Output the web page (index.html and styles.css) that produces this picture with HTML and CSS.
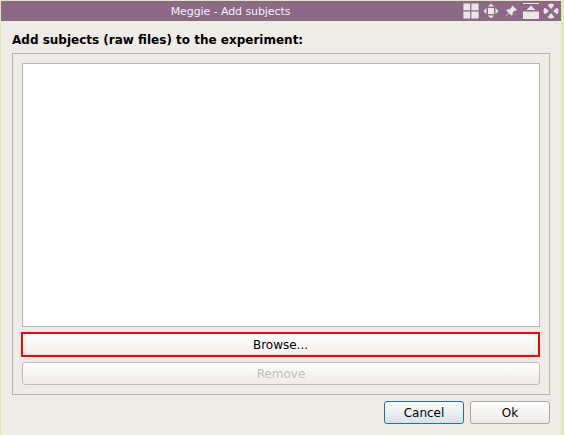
FILE: index.html
```html
<!DOCTYPE html>
<html lang="en">
<head>
<meta charset="utf-8">
<title>Meggie - Add subjects</title>
<link rel="stylesheet" href="styles.css">
</head>
<body>
<div class="window">
  <header class="titlebar">
    <span class="title">Meggie - Add subjects</span>
    <div class="controls">
      <svg viewBox="0 0 16 16"><path d="M.4.4H7.2v6.8H.4zM8.4.4h7.2v6.8H8.4zM.4 8.6h6.8v7H.4zM8.4 8.6h7.2v7H8.4z"/></svg>
      <svg viewBox="0 0 16 16"><path d="M5 5h6v6H5zM8 .5L11.2 3.5H4.8zM8 15.5L4.8 12.5h6.4zM.5 8L3.5 4.8v6.4zM15.5 8l-3-3.2v6.4z"/></svg>
      <svg viewBox="0 0 16 16"><path d="M9.5 2.5L14 7l-1.2.7-1-.2-2.3 2.3.2 2-1 1-2.6-2.6L3 13.5l-.5-.5 3.3-3.1-2.5-2.6 1-1 2.1.2 2.3-2.3-.2-1z"/></svg>
      <svg viewBox="0 0 16 16"><path d="M0 0h16v1H0zM8 2.5L12.5 7h-9zM0 8.5h16V16H0z"/></svg>
      <svg viewBox="0 0 16 16"><path d="M8 6L4.7 2Q5.5.5 8 .5T11.3 2zM8 10l3.3 4q-.8 1.5-3.3 1.5T4.7 14zM6 8l-4 3.3Q.5 10.5.5 8T2 4.7zM10 8l4-3.3q1.5.8 1.5 3.3T14 11.3z"/></svg>
    </div>
  </header>
  <main class="content">
    <h1 class="heading">Add subjects (raw files) to the experiment:</h1>
    <section class="group">
      <div class="file-list"></div>
      <button class="button browse">Browse...</button>
      <button class="button remove" disabled>Remove</button>
    </section>
    <footer class="actions">
      <button class="button cancel">Cancel</button>
      <button class="button ok">Ok</button>
    </footer>
  </main>
</div>
</body>
</html>
```
FILE: styles.css
```css
* { box-sizing: border-box; }
body {
  margin: 0;
  height: 435px;
  padding: 1px 3px 0 1px;
  overflow: hidden;
  background: #dfebb5;
  font: 12px "DejaVu Sans", sans-serif;
  color: #000;
}
.window { height: 434px; background: #efebe7; }
.titlebar {
  display: flex;
  height: 20px;
  background: #8b6987;
  color: #f3eef2;
}
.title {
  flex: 1;
  padding-right: 3px;
  font-size: 11px;
  letter-spacing: -0.08px;
  line-height: 21px;
  text-align: center;
}
.controls { display: flex; gap: 4px; padding: 2px 2px 0 0; }
.controls svg { width: 16px; height: 16px; fill: #ece6e9; }
.content { padding: 0 11px; }
.heading {
  margin: 0;
  height: 32px;
  padding-top: 11px;
  font-size: 12px;
  line-height: 16px;
}
.group {
  display: flex;
  flex-direction: column;
  height: 342px;
  padding: 9px;
  border: 1px solid #b8b5b2;
}
.file-list { height: 264px; background: #fff; border: 1px solid #b8b5b2; }
.button {
  display: block;
  height: 23px;
  padding: 2px 0 0;
  border: 1px solid #aaa7a4;
  border-radius: 3px;
  background: linear-gradient(#fefefe, #eeebe8);
  font: inherit;
  line-height: 19px;
  color: #000;
}
.browse {
  height: 25px;
  margin: 5px 0 0 -1px;
  border: 2px solid #f00;
  border-radius: 0;
  background: linear-gradient(#fefefe, #f3f0ee);
}
.remove { margin-top: 5px; border-color: #c1bebb; color: #bebebe; }
.actions {
  display: flex;
  justify-content: flex-end;
  gap: 6px;
  padding-top: 6px;
}
.actions .button { width: 80px; }
.actions .cancel {
  border-color: #2372a3;
  background: linear-gradient(#fcfdfd, #d9e0e4);
}
```
